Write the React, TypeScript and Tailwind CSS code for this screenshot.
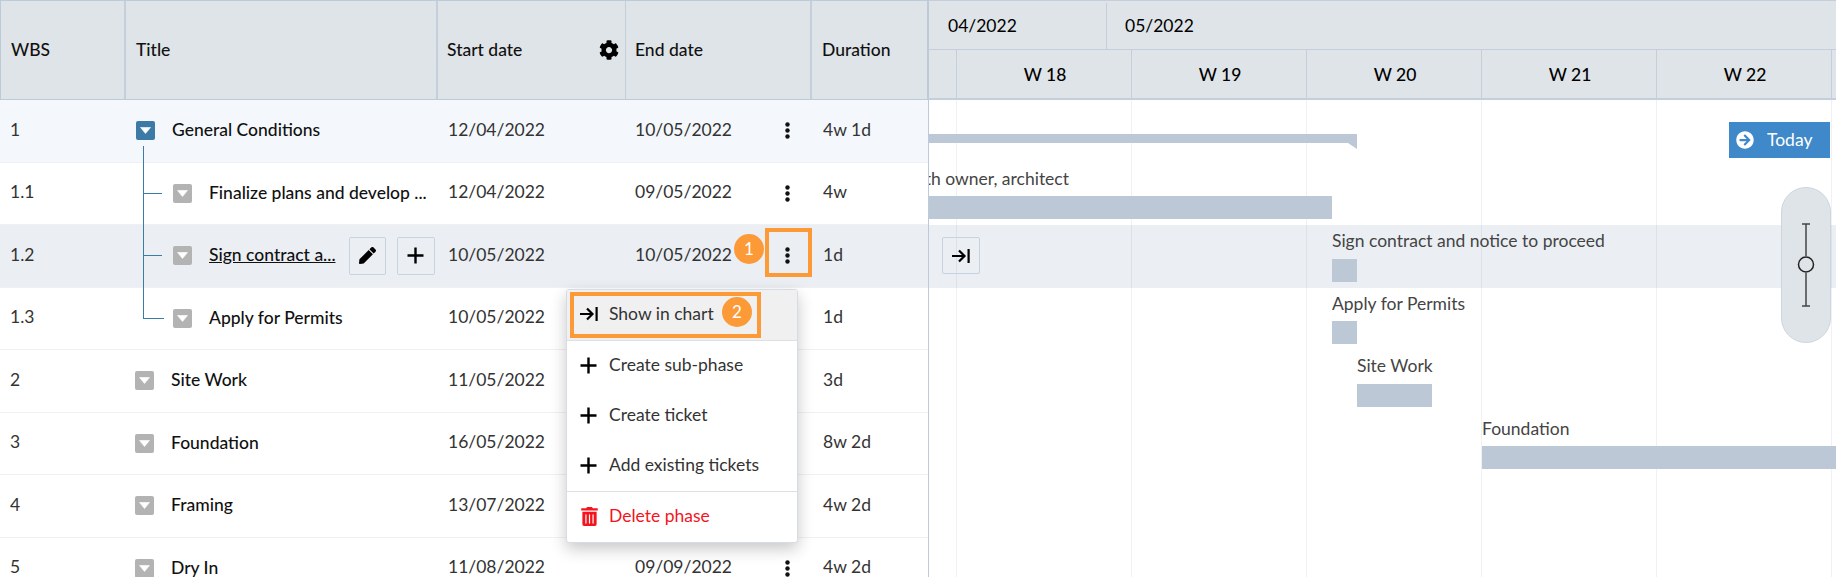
import React from 'react';
import { FaCog, FaPen, FaTrashAlt, FaArrowCircleRight } from 'react-icons/fa';

interface Phase {
  wbs: string;
  title: string;
  start: string;
  end: string;
  duration: string;
  level: number;
}

// end date of the rows behind the open menu is not visible
const phases: Phase[] = [
  { wbs: '1', title: 'General Conditions', start: '12/04/2022', end: '10/05/2022', duration: '4w 1d', level: 0 },
  { wbs: '1.1', title: 'Finalize plans and develop ...', start: '12/04/2022', end: '09/05/2022', duration: '4w', level: 1 },
  { wbs: '1.2', title: 'Sign contract a...', start: '10/05/2022', end: '10/05/2022', duration: '1d', level: 1 },
  { wbs: '1.3', title: 'Apply for Permits', start: '10/05/2022', end: '', duration: '1d', level: 1 },
  { wbs: '2', title: 'Site Work', start: '11/05/2022', end: '', duration: '3d', level: 0 },
  { wbs: '3', title: 'Foundation', start: '16/05/2022', end: '', duration: '8w 2d', level: 0 },
  { wbs: '4', title: 'Framing', start: '13/07/2022', end: '', duration: '4w 2d', level: 0 },
  { wbs: '5', title: 'Dry In', start: '11/08/2022', end: '09/09/2022', duration: '4w 2d', level: 0 },
];

const weeks = ['W 18', 'W 19', 'W 20', 'W 21', 'W 22'];

const ToggleBox = ({ active }: { active?: boolean }) => (
  <span
    className={`flex h-[19px] w-[19px] shrink-0 items-center justify-center rounded-[2px] ${
      active ? 'bg-[#3c7ba6]' : 'bg-[#b3b3b3]'
    }`}
  >
    <svg width="11" height="7" viewBox="0 0 11 7">
      <path d="M0.5 0.5h10L5.5 6.5z" fill="#fff" stroke="#fff" strokeLinejoin="round" strokeWidth="0.6" />
    </svg>
  </span>
);

const Dots = () => (
  <svg width="5" height="17" viewBox="0 0 5 17" fill="#111">
    <circle cx="2.5" cy="2.5" r="2.2" />
    <circle cx="2.5" cy="8.5" r="2.2" />
    <circle cx="2.5" cy="14.5" r="2.2" />
  </svg>
);

const PlusIcon = () => (
  <svg width="17" height="17" viewBox="0 0 17 17" stroke="#000" strokeWidth="2.4">
    <path d="M8.5 0.5v16M0.5 8.5h16" />
  </svg>
);

const ShowIcon = () => (
  <svg width="18" height="14" viewBox="0 0 18 14" fill="none" stroke="#000" strokeWidth="2.2">
    <path d="M0 7h12.5M7 1.5l5.5 5.5L7 12.5M16.6 0v14" />
  </svg>
);

const Badge = ({ n }: { n: number }) => (
  <span className="flex h-[30px] w-[30px] items-center justify-center rounded-full bg-[#fb9a36] text-[17px] text-white">
    {n}
  </span>
);

const GhostButton = ({ children, className }: { children: React.ReactNode; className: string }) => (
  <span className={`flex items-center justify-center rounded-[2px] border border-[#c6d2de] text-black ${className}`}>
    {children}
  </span>
);

const TableRow = ({ phase, index }: { phase: Phase; index: number }) => {
  const hovered = phase.wbs === '1.2';
  let bg = 'bg-white';
  if (index === 0) bg = 'bg-[#f4f8fc]';
  if (hovered) bg = 'bg-[#ebeff4]';
  const lastChild = phase.wbs === '1.3';

  return (
    <div className={`flex h-[62.5px] shrink-0 items-center border-b border-[#f0f1f3] ${bg}`}>
      <div className="w-[125px] shrink-0 pl-[10px] pb-[2px] text-[#333]">{phase.wbs}</div>
      <div className="relative flex h-full w-[313px] shrink-0 items-center">
        {phase.wbs === '1' && <span className="absolute bottom-[-1px] left-[18px] top-[46px] w-px bg-[#3c7ba6]" />}
        {phase.level === 1 && (
          <>
            <span className={`absolute left-[18px] top-0 w-px bg-[#3c7ba6] ${lastChild ? 'h-[31px]' : 'h-[calc(100%+1px)]'}`} />
            <span className={`absolute left-[18px] top-[30px] h-px bg-[#3c7ba6] ${lastChild ? 'w-[21px]' : 'w-[19px]'}`} />
          </>
        )}
        {phase.level === 1 ? (
          <div className="pl-[48px]">
            <ToggleBox />
          </div>
        ) : (
          <div className={phase.wbs === '1' ? 'ml-[11px]' : 'ml-[10px]'}>
            <ToggleBox active={phase.wbs === '1'} />
          </div>
        )}
        <span
          className={`ml-[17px] whitespace-nowrap pb-[1px] font-medium text-[#111] ${hovered ? 'underline' : ''}`}
        >
          {phase.title}
        </span>
        {hovered && (
          <div className="ml-[13px] flex gap-[11px]">
            <GhostButton className="h-[38px] w-[37px]">
              <FaPen size={17} />
            </GhostButton>
            <GhostButton className="h-[38px] w-[38px]">
              <PlusIcon />
            </GhostButton>
          </div>
        )}
      </div>
      <div className="w-[187px] shrink-0 pl-[10px] pb-[2px] text-[#333]">{phase.start}</div>
      <div className="flex w-[186px] shrink-0 items-center pl-[10px]">
        {phase.end && (
          <>
            <span className="w-[150px] pb-[2px] text-[#333]">{phase.end}</span>
            <Dots />
          </>
        )}
      </div>
      <div className="pl-[12px] pb-[2px] text-[#333]">{phase.duration}</div>
    </div>
  );
};

const ChartBar = ({ label, start, width, labelWidth }: { label: string; start: number; width: number; labelWidth?: number }) => (
  <div className="flex h-full flex-col pt-[5.5px]" style={{ paddingLeft: start }}>
    <div
      className="flex h-[22px] items-center overflow-hidden whitespace-nowrap text-[#444]"
      style={{ width: labelWidth ?? 'auto', justifyContent: labelWidth ? 'flex-end' : 'flex-start' }}
    >
      {label}
    </div>
    <div className="mt-[6px] h-[23px] shrink-0 bg-[#bcc8d6]" style={{ width }} />
  </div>
);

const MenuItem = ({ icon, label, className }: { icon: React.ReactNode; label: string; className?: string }) => (
  <div className={`flex h-[50px] items-center pb-[2px] pl-[13px] ${className ?? 'text-[#333]'}`}>
    <span className="flex w-[29px] shrink-0 items-center">{icon}</span>
    {label}
  </div>
);

export default function App() {
  return (
    <div className="relative flex h-[577px] w-[1838px] overflow-hidden bg-white font-[Lato,sans-serif] text-[17.5px]">
      {/* task table */}
      <div className="flex w-[928px] shrink-0 flex-col">
        <div className="flex h-[100px] shrink-0 border border-[#bccad9] bg-[#dfe4e8] font-medium text-[#111]">
          <div className="flex w-[125px] items-center border-r-2 border-[#c4cfdb] pl-[10px]">WBS</div>
          <div className="flex w-[312px] items-center border-r-2 border-[#c4cfdb] pl-[10px]">Title</div>
          <div className="flex w-[188px] items-center justify-between border-r border-[#c4cfdb] pl-[9px] pr-[6px]">
            Start date
            <FaCog size={20} className="text-black" />
          </div>
          <div className="flex w-[186px] items-center border-r-2 border-[#c4cfdb] pl-[9px]">End date</div>
          <div className="flex flex-1 items-center pl-[10px]">Duration</div>
        </div>
        {phases.map((phase, i) => (
          <TableRow key={phase.wbs} phase={phase} index={i} />
        ))}
      </div>

      {/* gantt chart */}
      <div className="relative mr-[2px] flex min-w-0 flex-1 flex-col border-l border-[#bccad9]">
        <div className="flex h-[50px] shrink-0 border-t border-b border-[#c4cfdb] bg-[#dfe4e8] pt-[2px] text-black">
          <div className="flex w-[178px] items-center border-r border-[#c4cfdb] pl-[19px]">04/2022</div>
          <div className="flex flex-1 items-center pl-[18px]">05/2022</div>
        </div>
        <div className="flex h-[50px] shrink-0 border-b-2 border-[#c4cfdb] bg-[#dfe4e8] font-medium text-black">
          <div className="w-[28px] shrink-0 border-r border-[#c4cfdb]" />
          {weeks.map((week) => (
            <div key={week} className="flex w-[175px] shrink-0 items-center justify-center border-r border-[#c4cfdb] pt-[2px] pl-[2px]">
              {week}
            </div>
          ))}
        </div>
        <div className="relative flex-1">
          <div className="absolute inset-0 flex">
            <div className="w-[28px] shrink-0 border-r border-[#eff1f4]" />
            {weeks.map((week) => (
              <div key={week} className="w-[175px] shrink-0 border-r border-[#eff1f4]" />
            ))}
          </div>
          <div className="relative flex flex-col">
            <div className="h-[62.5px] pt-[34px]">
              <div className="h-[15px] w-[428px] bg-[#bcc8d6] [clip-path:polygon(0_0,100%_0,100%_100%,calc(100%-9px)_9px,0_9px)]" />
            </div>
            <div className="h-[62.5px]">
              <ChartBar label="with owner, architect" start={0} width={403} labelWidth={140} />
            </div>
            <div className="h-[62.5px] bg-[#1e5082]/[0.09]">
              <ChartBar label="Sign contract and notice to proceed" start={403} width={25} />
            </div>
            <div className="h-[62.5px]">
              <ChartBar label="Apply for Permits" start={403} width={25} />
            </div>
            <div className="h-[62.5px]">
              <ChartBar label="Site Work" start={428} width={75} />
            </div>
            <div className="h-[62.5px]">
              <ChartBar label="Foundation" start={553} width={354} />
            </div>
          </div>
        </div>
      </div>

      {/* floating controls on the chart */}
      <GhostButton className="absolute left-[942px] top-[237px] h-[37px] w-[38px]">
        <ShowIcon />
      </GhostButton>
      <div className="absolute left-[1729px] top-[122px] flex h-[36px] w-[101px] items-center bg-[#3f88c9] pl-[7px] text-white">
        <FaArrowCircleRight size={18} />
        <span className="ml-[13px]">Today</span>
      </div>
      <div className="absolute left-[1781px] top-[187px] flex h-[156px] w-[50px] items-center justify-center rounded-[25px] border border-[#ccd6e0] bg-[#dfe4e8]">
        <svg width="20" height="84" viewBox="0 0 20 84" fill="none" stroke="#444" strokeWidth="1.5">
          <path d="M6 1h8M10 1v32M10 50v33M6 83h8" />
          <circle cx="10" cy="41.5" r="7.5" stroke="#222" />
        </svg>
      </div>

      {/* row menu */}
      <div className="absolute left-[566px] top-[289px] flex w-[232px] flex-col rounded-[3px] border border-[#d5dce3] bg-white shadow-[0_6px_16px_rgba(0,0,0,0.22)]">
        <div className="border-b border-[#dde1e6] bg-[#f0f0f0]">
          <MenuItem icon={<ShowIcon />} label="Show in chart" />
        </div>
        <div className="flex flex-col border-b border-[#dde1e6]">
          <MenuItem icon={<PlusIcon />} label="Create sub-phase" />
          <MenuItem icon={<PlusIcon />} label="Create ticket" />
          <MenuItem icon={<PlusIcon />} label="Add existing tickets" />
        </div>
        <MenuItem icon={<FaTrashAlt size={19} />} label="Delete phase" className="text-[#f5141e]" />
      </div>

      {/* annotations */}
      <div className="absolute left-[765px] top-[228px] h-[49px] w-[47px] border-[4px] border-[#fb9a36]" />
      <div className="absolute left-[734px] top-[234px]">
        <Badge n={1} />
      </div>
      <div className="absolute left-[570px] top-[292px] h-[46px] w-[191px] border-[4px] border-[#fb9a36]" />
      <div className="absolute left-[722px] top-[297px]">
        <Badge n={2} />
      </div>
    </div>
  );
}
